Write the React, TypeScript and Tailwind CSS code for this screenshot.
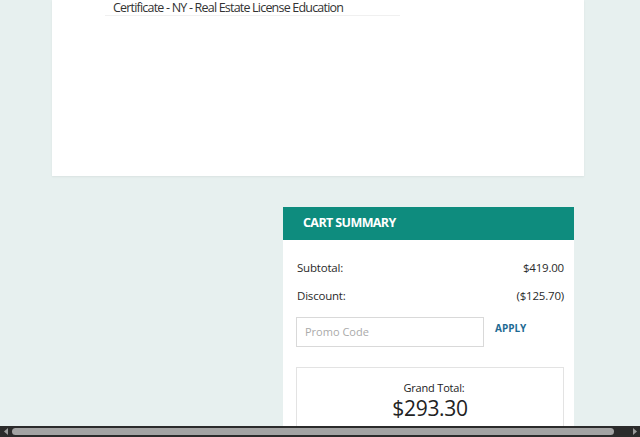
import React from "react";

export default function App() {
  return (
    <div
      className="w-[640px] h-[437px] overflow-hidden bg-[#e7f0ef] flex flex-col text-[#333]"
      style={{ fontFamily: '"Open Sans", "Liberation Sans", sans-serif' }}
    >
      <div className="h-[426px] flex flex-col">
        <div className="ml-[52px] w-[532px] h-[176px] bg-white shadow-[0_1px_2px_rgba(0,0,0,0.06)] shrink-0">
          <div className="ml-[53px] w-[295px] border-b border-[#f0f0f0] pl-[8px] h-[16px] flex items-center text-[12.5px] leading-[15px] tracking-[-0.8px] text-[#333]">
            Certificate - NY - Real Estate License Education
          </div>
        </div>
        <div className="ml-[283px] mt-[31px] w-[291px] flex-1 flex flex-col bg-white">
          <div className="h-[33px] bg-[#0e8c7e] flex items-center pl-[20px] text-white font-bold text-[12.5px] tracking-[-0.6px]">
            CART SUMMARY
          </div>
          <div className="pl-[14px] pr-[10px] pt-[20px] text-[11.5px] text-[#2a2a2a]">
            <div className="flex justify-between h-[16px] items-center tracking-[-0.2px]">
              <span>Subtotal:</span>
              <span>$419.00</span>
            </div>
            <div className="flex justify-between h-[16px] items-center mt-[12px] tracking-[-0.2px]">
              <span>Discount:</span>
              <span>($125.70)</span>
            </div>
            <div className="flex mt-[13px] -ml-[1px]">
              <div className="w-[188px] h-[30px] border border-[#d9d9d9] flex items-center pl-[8px] text-[#aaa] text-[11px]">
                Promo Code
              </div>
              <div className="ml-[11px] pt-[4px] text-[10px] font-bold text-[#1e6a93]">APPLY</div>
            </div>
            <div className="mt-[20px] -ml-[1px] w-[268px] h-[60px] border border-b-0 border-[#e3e3e3] flex flex-col items-center pt-[13px]">
              <div className="text-[11px] leading-[14px] text-[#222] pl-[8px] tracking-[-0.2px]">Grand Total:</div>
              <div className="text-[21px] leading-[24px] text-[#222] mt-[1px] tracking-[-0.3px]">$293.30</div>
            </div>
          </div>
        </div>
      </div>
      <div className="h-[11px] bg-[#2b2b2b] flex items-center relative">
        <svg width="6" height="7" viewBox="0 0 6 7" className="ml-[3px]">
          <path d="M5 0 L1 3.5 L5 7 Z" fill="#9a9a9a" />
        </svg>
        <div className="ml-[3px] w-[602px] h-[7px] rounded-full bg-[#a3a3a3]"></div>
        <svg width="6" height="7" viewBox="0 0 6 7" className="ml-[18px]">
          <path d="M1 0 L5 3.5 L1 7 Z" fill="#9a9a9a" />
        </svg>
      </div>
    </div>
  );
}
